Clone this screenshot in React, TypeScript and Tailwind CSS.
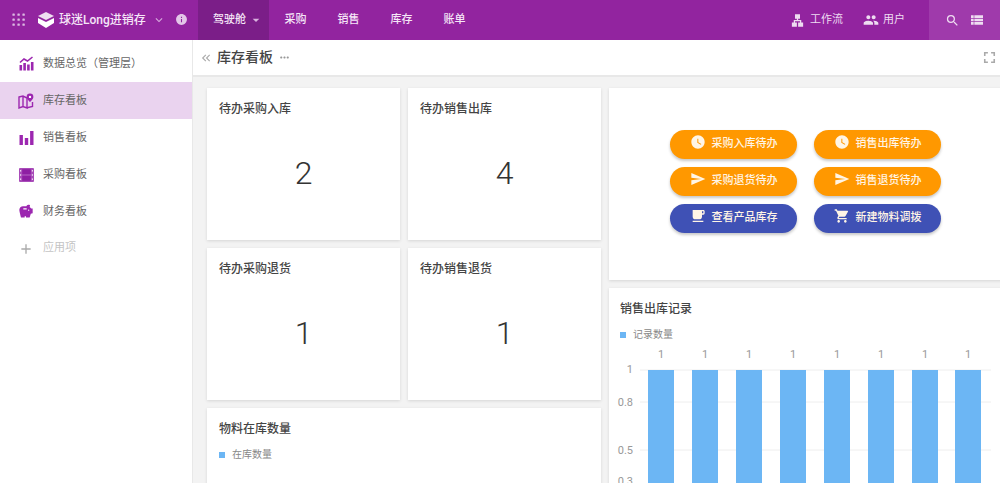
import React from "react";
import {
  MdExpandMore, MdInfo, MdArrowDropDown, MdLan, MdPeople, MdSearch, MdViewList,
  MdFullscreen, MdKeyboardDoubleArrowLeft, MdMoreHoriz, MdWatchLater, MdSend, MdLocalCafe,
  MdShoppingCart, MdSavings, MdAdd,
} from "react-icons/md";

const font = "font-['Roboto','Noto_Sans_CJK_SC',sans-serif]";

function AppsDots() {
  const pos = [1.5, 6.5, 11.5];
  return (
    <svg width="14" height="14" viewBox="0 0 14 14" fill="#dcb8e2">
      {pos.map((y) => pos.map((x) => <rect key={`${x}-${y}`} x={x - 1.1} y={y - 1.1} width="2.4" height="2.4" rx="0.6" />))}
    </svg>
  );
}

function Logo() {
  return (
    <svg width="18" height="18" viewBox="0 0 18 18" fill="#fff">
      <path d="M9 1 L17 5 L9 9 L1 5 Z" opacity="0.85" />
      <path d="M1 7 L9 11 L17 7 V12 L9 17 L1 12 Z" />
    </svg>
  );
}

function TrendIcon() {
  return (
    <svg width="15" height="15" viewBox="0 0 15 15" fill="#9c27b0">
      <rect x="0.5" y="9" width="2.6" height="5.5" />
      <rect x="4.3" y="7" width="2.6" height="7.5" />
      <rect x="8.1" y="8.5" width="2.6" height="6" />
      <rect x="11.9" y="6" width="2.6" height="8.5" />
      <path d="M1 6.5 L5 3 L8.5 5 L13.5 1" stroke="#9c27b0" strokeWidth="1.6" fill="none" />
    </svg>
  );
}

function MapPinIcon() {
  return (
    <svg width="16" height="16" viewBox="0 0 16 16" fill="none">
      <path d="M1 4 L5 3 L9 5 V15 L5 13.5 L1 15 Z M5 3 V13.5" stroke="#9c27b0" strokeWidth="1.4" />
      <path d="M9 14.8 L14.5 13.5 V9" stroke="#9c27b0" strokeWidth="1.4" />
      <path d="M12 0.5 A3.4 3.4 0 0 1 15.4 3.9 C15.4 6 12 9 12 9 C12 9 8.6 6 8.6 3.9 A3.4 3.4 0 0 1 12 0.5 Z" fill="#9c27b0" />
      <circle cx="12" cy="3.9" r="1.2" fill="#fff" />
    </svg>
  );
}

function BarsIcon() {
  return (
    <svg width="15" height="14" viewBox="0 0 15 14" fill="#9c27b0">
      <rect x="0.5" y="4" width="3.4" height="10" />
      <rect x="5.8" y="7" width="3.4" height="7" />
      <rect x="11.1" y="0" width="3.4" height="14" />
    </svg>
  );
}

function FilmIcon() {
  return (
    <svg width="15" height="14" viewBox="0 0 15 14">
      <rect x="0" y="0" width="15" height="14" rx="1" fill="#a94cb9" />
      <rect x="3.2" y="1.2" width="8.6" height="5" fill="#8e1fa3" />
      <rect x="3.2" y="7.8" width="8.6" height="5" fill="#8e1fa3" />
      <g fill="#ead3ef">
        <rect x="1" y="2" width="1.2" height="1.6" />
        <rect x="1" y="6.2" width="1.2" height="1.6" />
        <rect x="1" y="10.4" width="1.2" height="1.6" />
        <rect x="12.8" y="2" width="1.2" height="1.6" />
        <rect x="12.8" y="6.2" width="1.2" height="1.6" />
        <rect x="12.8" y="10.4" width="1.2" height="1.6" />
      </g>
    </svg>
  );
}

function NavLink({ label, arrow, active }: { label: string; arrow?: boolean; active?: boolean }) {
  return (
    <div className={`flex items-center h-10 text-[11px] font-medium text-[#f5e6f7] ${active ? "bg-[#7b1e88] w-[71px] pl-[15px]" : "w-[53px] justify-center"}`}>
      {label}
      {arrow && <MdArrowDropDown size={16} className="ml-[2px] text-[#d9b3df]" />}
    </div>
  );
}

function Header() {
  return (
    <header className="h-10 bg-[#92249f] flex items-center text-white shrink-0">
      <div className="ml-[12px]"><AppsDots /></div>
      <div className="ml-[11px]"><Logo /></div>
      <span className="ml-[4px] text-[12px] font-medium text-[#f5e6f7] w-[93px] whitespace-nowrap">球迷Long进销存</span>
      <MdExpandMore size={14} className="text-[#d5a9dc]" />
      <MdInfo size={13} className="ml-[9px] -translate-y-[1px] text-[#e3c6e8]" />
      <div className="ml-[10px] flex items-center">
        <NavLink label="驾驶舱" arrow active />
        <NavLink label="采购" />
        <NavLink label="销售" />
        <NavLink label="库存" />
        <NavLink label="账单" />
      </div>
      <div className="ml-auto flex items-center h-full">
        <div className="flex items-center gap-[5px] text-[11px] text-[#eedcf1]">
          <MdLan size={15} />
          <span>工作流</span>
        </div>
        <div className="ml-[20px] mr-[24px] flex items-center gap-[4px] text-[11px] text-[#eedcf1]">
          <MdPeople size={16} />
          <span>用户</span>
        </div>
        <div className="w-[71px] h-full bg-[#9f3aab] flex items-center pl-[16px] gap-[9px] text-[#eedcf1]">
          <MdSearch size={15} />
          <MdViewList size={16} />
        </div>
      </div>
    </header>
  );
}

function SideItem({ icon, label, active }: { icon: React.ReactNode; label: string; active?: boolean }) {
  return (
    <div className={`h-[37px] flex items-center pl-[18px] gap-[9px] text-[11px] text-[#666] ${active ? "bg-[#ead3ef]" : ""}`}>
      <span className="w-[16px] flex justify-center">{icon}</span>
      <span className="translate-y-[1px]">{label}</span>
    </div>
  );
}

function Sidebar() {
  return (
    <aside className="w-[193px] shrink-0 bg-white border-r border-[#e8e8e8] pt-[5px]">
      <SideItem icon={<TrendIcon />} label="数据总览（管理层）" />
      <SideItem icon={<MapPinIcon />} label="库存看板" active />
      <SideItem icon={<BarsIcon />} label="销售看板" />
      <SideItem icon={<FilmIcon />} label="采购看板" />
      <SideItem icon={<MdSavings size={19} className="text-[#9c27b0]" />} label="财务看板" />
      <div className="h-[37px] flex items-center pl-[18px] gap-[9px] text-[11px] text-[#c4c4c4]">
        <span className="w-[16px] flex justify-center"><MdAdd size={16} className="text-[#aaa]" /></span>
        <span>应用项</span>
      </div>
    </aside>
  );
}

function StatCard({ title, value }: { title: string; value: number }) {
  return (
    <div className="h-[152px] bg-white shadow-[0_1px_3px_rgba(0,0,0,0.12)] flex flex-col">
      <div className="pl-3 pt-[13px] text-[12px] font-medium text-[#444] leading-[16px]">{title}</div>
      <div className="flex-1 flex items-center justify-center text-[32px] font-light text-[#333] pb-[11px]">{value}</div>
    </div>
  );
}

function Pill({ icon, label, color }: { icon: React.ReactNode; label: string; color: string }) {
  return (
    <div className={`w-[127px] h-[29px] rounded-full flex items-center justify-center gap-[6px] text-[11px] font-medium text-[#fff5e6] shadow-[0_2px_3px_rgba(0,0,0,0.22)] ${color}`}>
      <span className="-translate-y-[2px]">{icon}</span>
      <span>{label}</span>
    </div>
  );
}

function ChartSvg() {
  const xs = [648, 692, 736, 780, 824, 868, 912, 955];
  return (
    <svg width="392" height="140" viewBox="609 344 392 140" className="block" fontSize="11" fill="#999" fontFamily="Roboto, sans-serif">
      {[370, 402, 450].map((y) => (
        <line key={y} x1="640" x2="991" y1={y} y2={y} stroke="#eeeeee" />
      ))}
      {xs.map((x) => (
        <React.Fragment key={x}>
          <rect x={x} y="370" width="26" height="114" fill="#6cb6f4" />
          <text x={x + 13} y="358" textAnchor="middle">1</text>
        </React.Fragment>
      ))}
      <text x="633" y="373" textAnchor="end">1</text>
      <text x="633" y="406" textAnchor="end">0.8</text>
      <text x="633" y="454" textAnchor="end">0.5</text>
      <text x="633" y="485" textAnchor="end">0.3</text>
    </svg>
  );
}

function Legend({ label }: { label: string }) {
  return (
    <div className="flex items-center gap-[7px] text-[10px] text-[#888] leading-[14px]">
      <span className="w-[6px] h-[6px] bg-[#6cb6f4]" />
      <span>{label}</span>
    </div>
  );
}

export default function App() {
  const clock = <MdWatchLater size={16} />;
  const send = <MdSend size={16} />;
  return (
    <div className={`w-[1000px] h-[483px] overflow-hidden flex flex-col bg-[#f3f3f3] ${font}`}>
      <Header />
      <div className="flex flex-1 min-h-0">
        <Sidebar />
        <div className="flex-1 min-w-0 flex flex-col">
          <div className="h-[37px] shrink-0 bg-white border-b-2 border-[#e8e8e8] flex items-center pl-[6px] pr-[1px]">
            <MdKeyboardDoubleArrowLeft size={14} className="text-[#aaa]" />
            <span className="ml-[4px] text-[14px] font-medium text-[#444]">库存看板</span>
            <MdMoreHoriz size={13} className="ml-[5px] text-[#999]" />
            <MdFullscreen size={19} className="ml-auto text-[#aaa]" />
          </div>
          <div className="flex-1 min-h-0 overflow-hidden flex gap-[8px] pl-[14px] pt-[11px]">
            <div className="w-[394px] shrink-0 grid grid-cols-2 gap-[8px] content-start">
              <StatCard title="待办采购入库" value={2} />
              <StatCard title="待办销售出库" value={4} />
              <StatCard title="待办采购退货" value={1} />
              <StatCard title="待办销售退货" value={1} />
              <div className="col-span-2 h-[200px] bg-white shadow-[0_1px_3px_rgba(0,0,0,0.12)] pl-3 pt-[13px]">
                <div className="text-[12px] font-medium text-[#444] leading-[16px]">物料在库数量</div>
                <div className="mt-[11px]"><Legend label="在库数量" /></div>
              </div>
            </div>
            <div className="w-[400px] shrink-0 flex flex-col gap-[8px]">
              <div className="h-[192px] shrink-0 bg-white shadow-[0_1px_3px_rgba(0,0,0,0.12)] flex justify-center items-center pr-[7px] pb-[6px]">
                <div className="grid grid-cols-[127px_127px] gap-x-[17px] gap-y-[8px]">
                  <Pill color="bg-[#ff9800]" icon={clock} label="采购入库待办" />
                  <Pill color="bg-[#ff9800]" icon={clock} label="销售出库待办" />
                  <Pill color="bg-[#ff9800]" icon={send} label="采购退货待办" />
                  <Pill color="bg-[#ff9800]" icon={send} label="销售退货待办" />
                  <Pill color="bg-[#3f51b5]" icon={<MdLocalCafe size={16} />} label="查看产品库存" />
                  <Pill color="bg-[#3f51b5]" icon={<MdShoppingCart size={16} />} label="新建物料调拨" />
                </div>
              </div>
              <div className="h-[300px] shrink-0 bg-white shadow-[0_1px_3px_rgba(0,0,0,0.12)]">
                <div className="pl-[11px] pt-[13px] text-[12px] font-medium text-[#444] leading-[16px]">销售出库记录</div>
                <div className="pl-[11px] mt-[11px]"><Legend label="记录数量" /></div>
                <div className="mt-[2px]"><ChartSvg /></div>
              </div>
            </div>
          </div>
        </div>
      </div>
    </div>
  );
}
